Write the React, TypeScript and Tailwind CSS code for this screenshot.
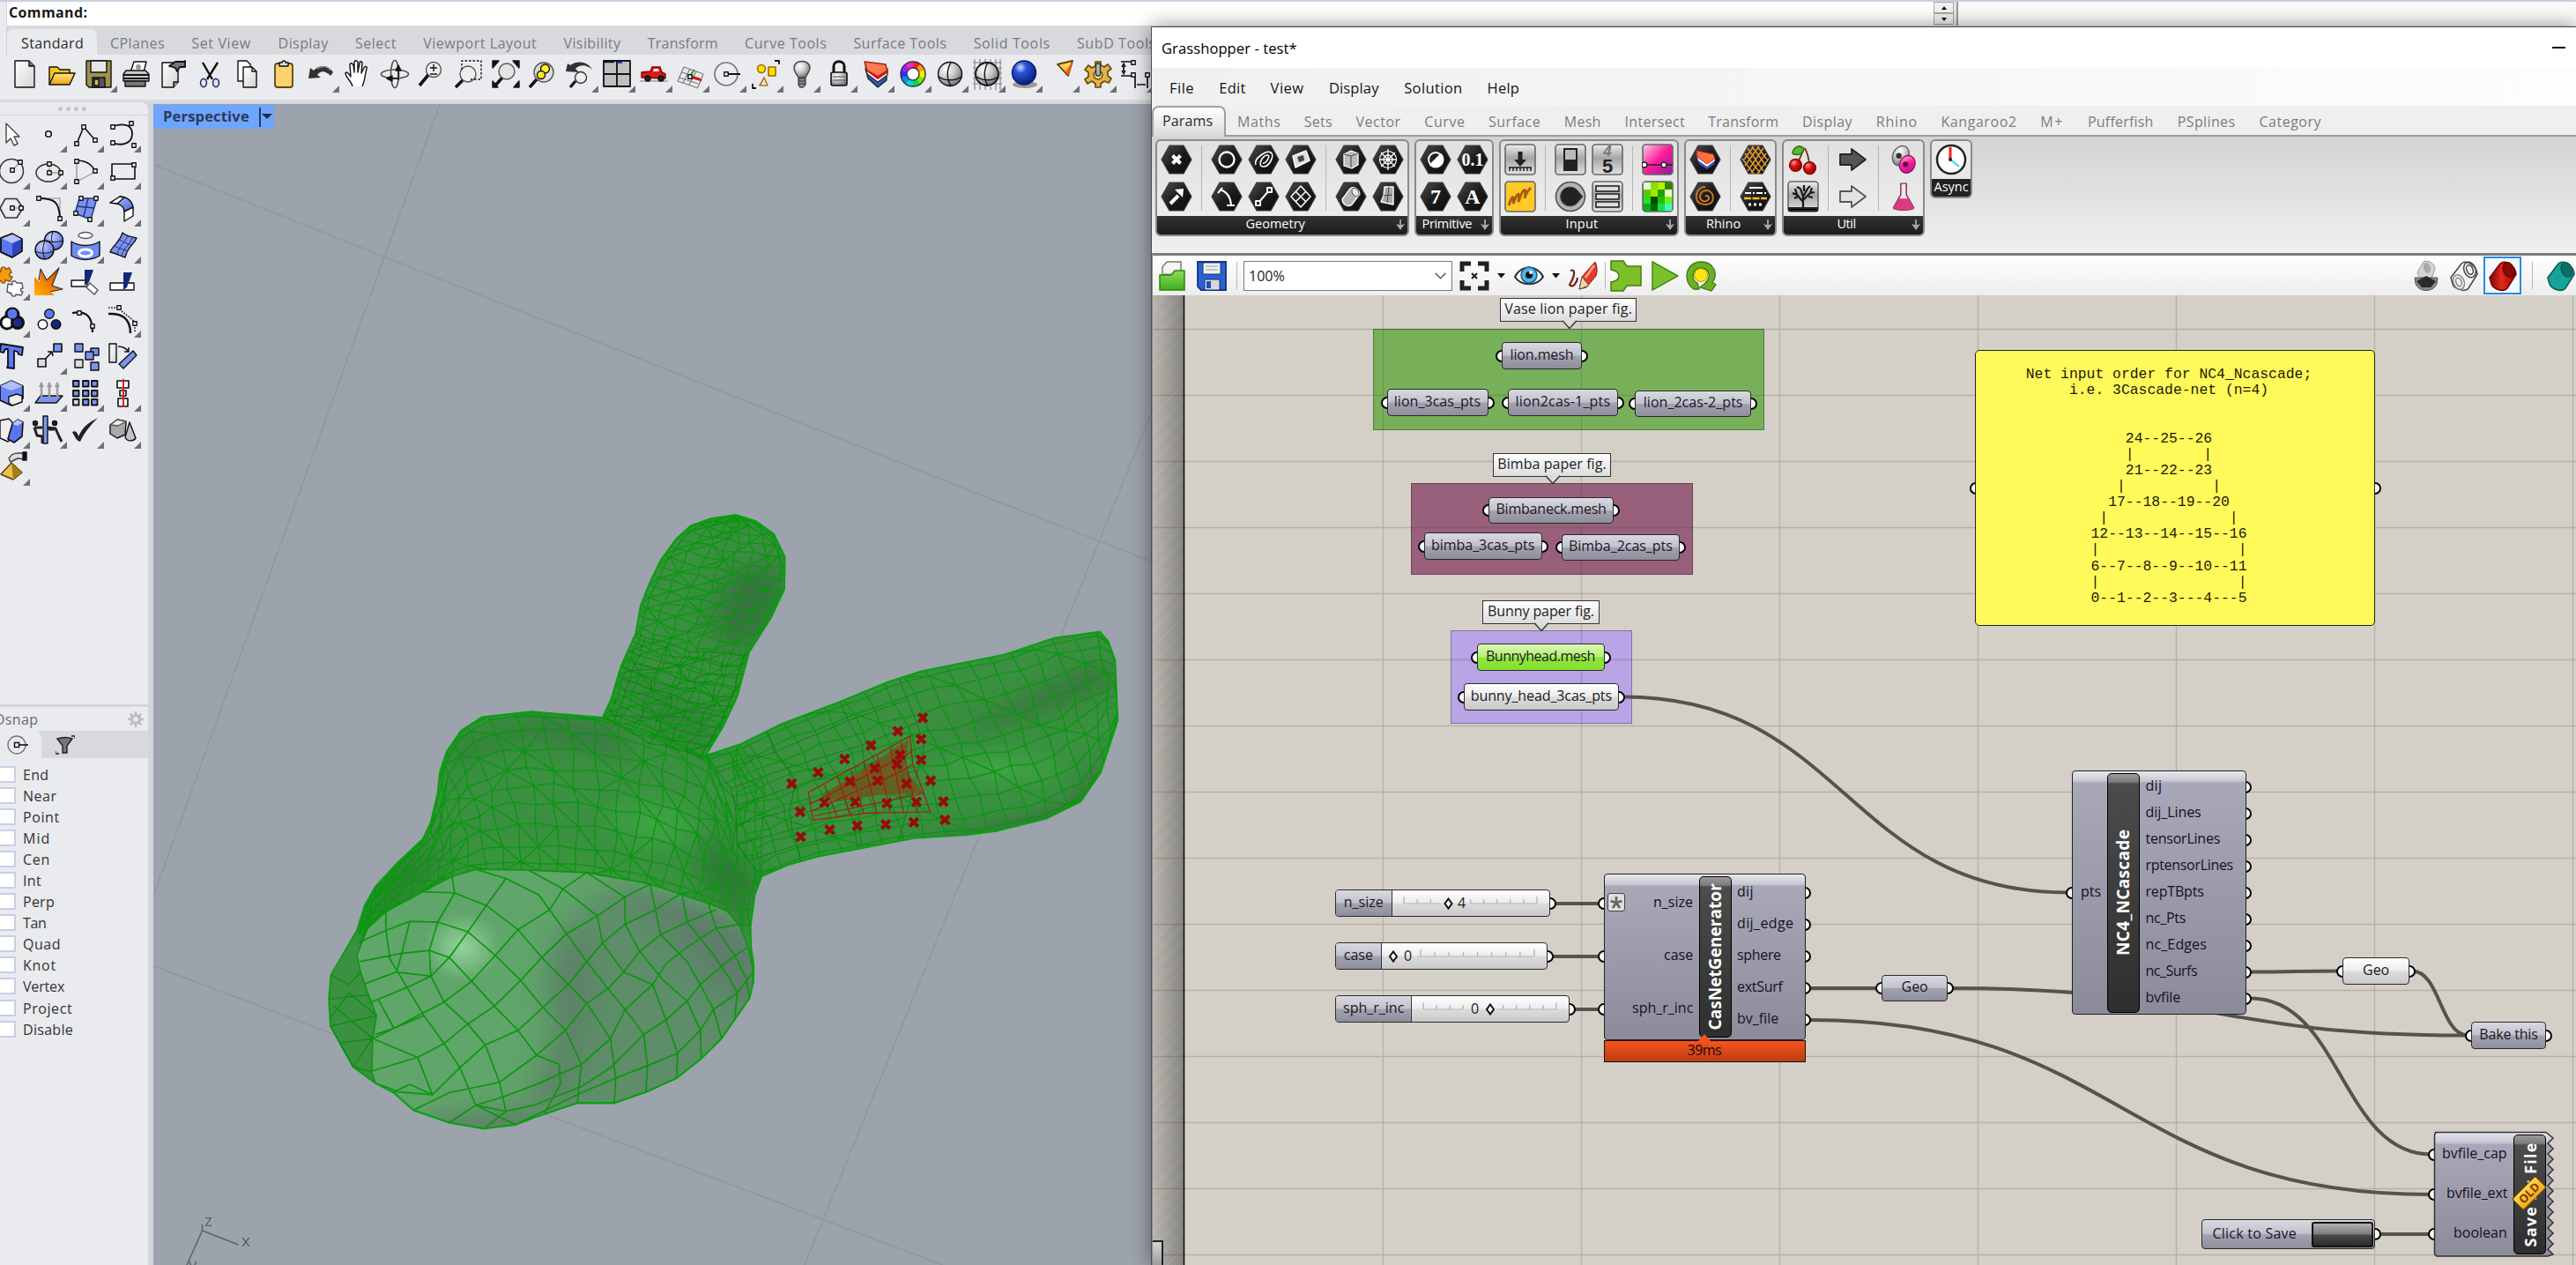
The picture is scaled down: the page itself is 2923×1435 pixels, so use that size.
import React, { useLayoutEffect, useRef, useState } from "react";

/* ---------- shared helpers ---------- */

/** Text tracked so that it fills exactly `w` pixels. */
function Fit({ t, w, className = "" }: { t: string; w: number; className?: string }) {
  const ref = useRef<HTMLSpanElement>(null);
  const [ls, setLs] = useState(0);
  useLayoutEffect(() => {
    const el = ref.current;
    if (!el) return;
    el.style.letterSpacing = "0px";
    const nat = el.offsetWidth;
    setLs((w - nat) / t.length);
    el.style.letterSpacing = (w - nat) / t.length + "px";
  }, [t, w]);
  return (
    <span className={"inline-block whitespace-pre shrink-0 " + className} style={{ width: w }}>
      <span ref={ref} className="inline-block whitespace-pre" style={{ letterSpacing: ls }}>
        {t}
      </span>
    </span>
  );
}

const Sq = ({ x, y, f = "#fff" }: { x: number; y: number; f?: string }) => (
  <rect x={x - 2.2} y={y - 2.2} width="4.4" height="4.4" fill={f} stroke="#111" strokeWidth="1.4" />
);
const B = "#7b92ee";
const K = "#111";

const Ico = ({ children, s = 32 }: { children: React.ReactNode; s?: number }) => (
  <svg width={s} height={s} viewBox="0 0 32 32" fill="none" stroke={K} strokeWidth="1.4" strokeLinejoin="round" className="overflow-visible">
    {children}
  </svg>
);

const Corner = () => (
  <svg width="8" height="8" viewBox="0 0 8 8" className="absolute right-0 bottom-0">
    <path d="M8 0V8H0Z" fill="#6f7073" />
  </svg>
);

const Defs = () => (
  <svg width="0" height="0" className="absolute">
    <defs>
      <linearGradient id="page" x1="0" y1="0" x2="1" y2="1"><stop offset="0" stopColor="#fff" /><stop offset="1" stopColor="#d4d4d4" /></linearGradient>
      <linearGradient id="gold" x1="0" y1="0" x2="0" y2="1"><stop offset="0" stopColor="#ffe680" /><stop offset="1" stopColor="#f0a10c" /></linearGradient>
      <linearGradient id="fire" x1="1" y1="0" x2="0" y2="1"><stop offset="0" stopColor="#e03c00" /><stop offset="1" stopColor="#ffb400" /></linearGradient>
      <linearGradient id="blu" x1="0" y1="0" x2="1" y2="1"><stop offset="0" stopColor="#b9c6ff" /><stop offset="1" stopColor="#4a63dd" /></linearGradient>
      <radialGradient id="ball" cx=".35" cy=".3" r=".75"><stop offset="0" stopColor="#fff" /><stop offset=".5" stopColor="#c9c9c9" /><stop offset="1" stopColor="#6d6d6d" /></radialGradient>
      <radialGradient id="bball" cx=".35" cy=".28" r=".8"><stop offset="0" stopColor="#cfe0ff" /><stop offset=".3" stopColor="#2a55d8" /><stop offset="1" stopColor="#06166e" /></radialGradient>
      <radialGradient id="sball" cx=".35" cy=".3" r=".8"><stop offset="0" stopColor="#c8d2ff" /><stop offset="1" stopColor="#4a63dd" /></radialGradient>
      <radialGradient id="cherry" cx=".35" cy=".3" r=".8"><stop offset="0" stopColor="#ff9a9a" /><stop offset=".4" stopColor="#dc1010" /><stop offset="1" stopColor="#8a0000" /></radialGradient>
      <linearGradient id="hex" x1="0" y1="0" x2="1" y2="1"><stop offset="0" stopColor="#4e4e4e" /><stop offset=".5" stopColor="#1c1c1c" /><stop offset="1" stopColor="#0b0b0b" /></linearGradient>
      <linearGradient id="btn" x1="0" y1="0" x2="0" y2="1"><stop offset="0" stopColor="#eee" /><stop offset=".45" stopColor="#a5a5a5" /><stop offset="1" stopColor="#e2e2e2" /></linearGradient>
      <linearGradient id="pink" x1="0" y1="0" x2="1" y2="1"><stop offset="0" stopColor="#ffd0ea" /><stop offset=".5" stopColor="#ff1a9a" /><stop offset="1" stopColor="#8a1ca0" /></linearGradient>
      <linearGradient id="red3" x1="0" y1="0" x2="1" y2="0"><stop offset="0" stopColor="#7d0500" /><stop offset=".45" stopColor="#e02a1c" /><stop offset="1" stopColor="#980500" /></linearGradient>
      <linearGradient id="grn" x1="0" y1="0" x2="0" y2="1"><stop offset="0" stopColor="#8ddc5c" /><stop offset="1" stopColor="#3fae1c" /></linearGradient>
    </defs>
  </svg>
);

/* ---------- Rhino: standard toolbar icons ---------- */

const wheel = ["#ff2020", "#ff9a00", "#f5f000", "#7be800", "#00d84a", "#00d8d0", "#0090ff", "#2a30ff", "#9a20ff", "#ff20d0"];

const stdIcons: { el: React.ReactNode; c?: boolean }[] = [
  { el: <Ico><path d="M5 1h16l6 6v24H5z" fill="url(#page)" /><path d="M21 1v6h6" fill="#777" /></Ico> },
  { el: <Ico><path d="M2 28V8h9l3 3h11v5" fill="#f4c81a" /><path d="M2 28l6-13h23l-6 13z" fill="url(#gold)" /></Ico> },
  { el: <Ico><path d="M2 1h28v30H5l-3-3z" fill="#9d934a" /><path d="M7 1h18v13H7z" fill="#e4e4e4" /><path d="M9 20h14v11H9z" fill="#555" /><path d="M11 22h5v7h-5z" fill="#c8bf6a" /></Ico>, c: true },
  { el: <Ico><path d="M10 14L14 2h14l-3 12z" fill="#fff" /><path d="M5 12h22l4 4v8H2v-8z" fill="#c6c6c6" /><path d="M2 17h29M2 21h29" strokeWidth="2" /><path d="M4 24h23v6H4z" fill="#777" /><circle cx="19" cy="8" r="3" fill="#999" stroke="none" /></Ico> },
  { el: <Ico><path d="M4 3h18v22l-5 6H4z" fill="url(#page)" /><path d="M17 31v-6h6" fill="#999" /><path d="M12 7l7-5h9l2-1v7h-6l-3 5-2-4z" fill="#777" strokeWidth="1.8" /></Ico> },
  { el: <Ico><path d="M8 3l11 19M25 3L13 22" strokeWidth="2.4" /><ellipse cx="9" cy="26" rx="3.4" ry="4.6" stroke="#27367f" strokeWidth="1.7" /><ellipse cx="23" cy="26" rx="3.4" ry="4.6" stroke="#27367f" strokeWidth="1.7" /></Ico> },
  { el: <Ico><path d="M6 1h10l4 4v19H6z" fill="#fff" /><path d="M12 8h10l5 5v18H12z" fill="url(#page)" /><path d="M22 8v5h5" /></Ico> },
  { el: <Ico><rect x="6" y="4" width="20" height="27" rx="3" fill="#fcd26c" stroke="#5d4813" strokeWidth="1.8" /><path d="M11 7V3h3a2 2 0 014 0h3v4z" fill="#ddd" /></Ico> },
  { el: <Ico><path d="M2 21l2-12 4 3c7-8 17-6 22 2l-3 4C21 12 16 12 12 17l4 3z" fill="#333" stroke="none" /><path d="M12 10c6-4 12-3 15 2" stroke="#999" /></Ico>, c: true },
  { el: <Ico><path d="M10 30c-1-6-8-10-8-15 0-2 3-1 6 4L7 6c0-3 3-3 4 0l1 8V3c0-3 3-3 4 0v11l2-10c0-3 3-3 3 0l-1 11 3-6c2-3 4-1 3 1-2 7-2 14-5 20" fill="#fff" /></Ico> },
  { el: <Ico><ellipse cx="16" cy="16" rx="4.5" ry="15.5" stroke="#555" strokeWidth="1.7" /><ellipse cx="16" cy="16" rx="15.5" ry="5" stroke="#555" strokeWidth="1.7" /><path d="M20 8v15M8 21h13" strokeWidth="1.5" /><path d="M20 6l-3 6h6zM7 21l6-3v6z" fill={K} /></Ico> },
  { el: <Ico><path d="M12 17L2 29" strokeWidth="3.6" /><circle cx="18" cy="11" r="8.5" fill="#eee" stroke="#555" /><path d="M14 9h8M18 5v8M14 16h8" /></Ico> },
  { el: <Ico><path d="M9 23l-8 8" strokeWidth="3.4" /><circle cx="15" cy="16" r="9" fill="#eee" stroke="#555" /><path d="M8 11V1h22v21H18" strokeDasharray="2.5 2" /></Ico> },
  { el: <Ico><path d="M1 1h7L1 9zM31 1h-7l7 8zM1 31v-7l6 7zM31 31v-7l-6 7z" fill={K} /><path d="M12 20L4 29" strokeWidth="3.4" /><circle cx="17" cy="13" r="9" fill="#e4e4e4" stroke="#555" /></Ico> },
  { el: <Ico><path d="M9 22l-8 9" strokeWidth="3.4" /><circle cx="17" cy="14" r="11" fill="#ddd" stroke="#555" /><circle cx="18.500" cy="10" r="5" fill="#ffef20" /><circle cx="14" cy="17" r="4.500" fill="#ffef20" /></Ico> },
  { el: <Ico><path d="M0 13l2-9 3 2c9-6 20-4 25 5-7-6-14-6-19-1l4 4z" fill="#333" stroke="none" /><path d="M11 24l-6 7" strokeWidth="3.200" /><circle cx="17" cy="20" r="6.500" fill="#eee" stroke="#333" /></Ico>, c: true },
  { el: <Ico><path d="M1 1h30v29H1z" fill="#c0c0c0" strokeWidth="1.8" /><path d="M16 1v29M1 16h30" strokeWidth="1.8" /><path d="M1 2h12" strokeWidth="2.500" /><path d="M17 3h5" stroke="#2638c8" strokeWidth="2" /></Ico>, c: true },
  { el: <Ico><path d="M0 24h32" stroke="#999" /><path d="M2 20v-6l10-1 2-5h9l2 6 4 2v5z" fill="#e01818" stroke="#8d0000" /><path d="M15 13l1-3h5l1 3z" fill="#eaeaea" stroke="none" /><circle cx="9" cy="21" r="3" fill="#222" /><circle cx="24" cy="21" r="3" fill="#222" /></Ico>, c: true },
  { el: <Ico><path d="M8 8l22 8M6 14l20 7M3 20l21 7M8 8L1 24M15 10L7 26M22 13l-8 15M30 16l-6 15M1 24l23 8" stroke="#777" strokeWidth="1.200" /><path d="M14 19l6-8" stroke="#2ca02c" strokeWidth="2" /><path d="M15 19l13 4" stroke="#d00" strokeWidth="2.800" /><Sq x={15} y={19} /></Ico>, c: true },
  { el: <Ico><circle cx="14" cy="16" r="13" stroke="#777" strokeWidth="1.700" /><path d="M15 16h15" strokeWidth="2" /><Sq x={14} y={16} /></Ico>, c: true },
  { el: <Ico><circle cx="12" cy="10" r="4.500" fill="#ffe000" stroke="#a06a00" strokeWidth="1.600" /><rect x="20" y="8" width="8" height="10" fill="#ffe000" stroke="#a06a00" strokeWidth="1.600" /><path d="M15 20l4 9h-9z" stroke="#b4761e" strokeWidth="1.600" /><path d="M27 1h5v4M2 27v5h4" strokeWidth="1.800" /></Ico>, c: true },
  { el: <Ico><path d="M12 20C9 15 7 13 7 9c0-10 18-10 18 0 0 4-3 6-5 11z" fill="url(#ball)" stroke="#444" /><path d="M12 21h8v7l-3 3h-3l-2-3z" fill="#999" stroke="#444" /><path d="M12 24h8M12 27h8" stroke="#444" /></Ico>, c: true },
  { el: <Ico><path d="M10 15V7c0-7 12-7 12 0v8" strokeWidth="3" /><rect x="7" y="14" width="18" height="15" rx="2" fill="url(#ball)" strokeWidth="1.600" /><path d="M9 19h14M9 23h14" stroke="#777" /></Ico>, c: true },
  { el: <Ico><path d="M4 10l3 11 11 10 10-8V13l-10 8z" fill="#2b55b8" stroke="#222" /><path d="M4 6l2 10 12 9 11-8V10L18 19z" fill="#fff" stroke="#333" /><path d="M3 2l24 3 2 9-11 7L6 12z" fill="#ff7a55" stroke="#a02510" /><path d="M6 11l12 7 11-7v3l-11 8-11-8z" fill="#d01212" stroke="none" /></Ico>, c: true },
  { el: <Ico>{wheel.map((c, i) => <circle key={c} cx="16" cy="16" r="10.500" stroke={c} strokeWidth="7" strokeDasharray="6.700 60" transform={"rotate(" + (i * 36 - 90) + " 16 16)"} />)}<circle cx="16" cy="16" r="14" stroke="#333" /><circle cx="16" cy="16" r="7" fill="#fff" stroke="#333" /></Ico>, c: true },
  { el: <Ico><circle cx="16" cy="16" r="13.500" fill="url(#ball)" /><path d="M3 19c7 5 19 5 26 0M17 3c-5 8-5 19 0 26" /></Ico>, c: true },
  { el: <Ico><path d="M0 3h33M0 9h33M0 15h33M0 21h33M0 27h33M2 -1v35M8 -1v35M14 -1v35M20 -1v35M26 -1v35M31 -1v35" stroke="#888" strokeWidth="1.200" /><circle cx="16" cy="16" r="13" fill="url(#ball)" strokeWidth="1.800" /><path d="M4 19c7 5 18 5 25 0M17 3c-5 8-5 19 0 26" /></Ico>, c: true },
  { el: <Ico><ellipse cx="17" cy="28" rx="14" ry="4" fill="#999" stroke="none" /><circle cx="16" cy="14.500" r="13.500" fill="url(#bball)" stroke="#0a1a6a" /></Ico>, c: true },
  { el: <Ico><path d="M12 5l17-4-5 17z" fill="url(#gold)" stroke="#6a3a00" strokeWidth="1.800" /><path d="M21 14l4 4 4-17z" fill="#e8601a" stroke="none" /></Ico>, c: true },
  { el: <Ico><path d="M13 2h6v4l4 2 4-3 4 5-4 3v5l4 3-3 5-5-2-4 3v4h-6v-4l-4-3-5 3-3-5 4-3v-5l-4-3 4-5 4 3 4-2z" fill="#e3b24a" stroke="#6a4a08" strokeWidth="1.700" /><circle cx="16" cy="17" r="5" fill="#f0d890" stroke="#6a4a08" /><rect x="13.500" y="4" width="5" height="14" rx="2" fill="#b5b5b5" stroke="#333" /></Ico>, c: true },
  { el: <Ico><path d="M0 2h14M0 18h14M3 5v10M16 19v13M30 19v13M18 28h10" strokeWidth="1.700" /><path d="M1 8l2-4 2 4M1 12l2 4 2-4" /><Sq x={14} y={3} /><Sq x={14} y={17} /><Sq x={30} y={17} /></Ico>, c: true },
];

/* ---------- Rhino: side toolbar icons ---------- */

const sideIcons: { el?: React.ReactNode; c?: boolean }[] = [
  { el: <Ico><path d="M10 4v22l5-5 4 8 4-2-4-8h6z" fill="#fff" stroke="#444" /></Ico> },
  { el: <Ico><circle cx="16" cy="16" r="3.300" fill="#fff" strokeWidth="1.600" /></Ico>, c: true },
  { el: <Ico><path d="M6 27L14 8l13 15" strokeWidth="1.600" /><Sq x={6} y={27} /><Sq x={14} y={8} /><Sq x={27} y={23} /></Ico>, c: true },
  { el: <Ico><path d="M5 7c18-5 22 2 22 9 0 11-12 14-22 10" strokeWidth="1.800" /><Sq x={5} y={8} /><Sq x={26} y={4} /><Sq x={5} y={26} /><Sq x={29} y={29} /></Ico>, c: true },
  { el: <Ico><circle cx="16" cy="16" r="13.500" strokeWidth="1.500" stroke="#333" /><path d="M17 15l8-8" stroke="#999" /><Sq x={17} y={15} /><Sq x={26} y={6} /></Ico>, c: true },
  { el: <Ico><ellipse cx="16" cy="18" rx="14" ry="10" strokeWidth="1.500" stroke="#333" /><path d="M17 18V8M17 18h12" stroke="#999" /><Sq x={17} y={18} /><Sq x={17} y={8} /><Sq x={30} y={18} /></Ico>, c: true },
  { el: <Ico><path d="M6 28V6M6 28l21-11" stroke="#999" /><path d="M6 4c9 0 17 4 21 12" strokeWidth="1.600" /><Sq x={6} y={5} /><Sq x={6} y={28} /><Sq x={27} y={16} /></Ico>, c: true },
  { el: <Ico><rect x="4" y="8" width="26" height="17" strokeWidth="1.600" /><Sq x={29} y={9} /><Sq x={5} y={24} /></Ico>, c: true },
  { el: <Ico><path d="M3 16L9 5.500h13L29 16l-7 11H9z" stroke="#333" strokeWidth="1.600" /><path d="M17 16h10" stroke="#999" /><Sq x={17} y={16} /><Sq x={27} y={16} /></Ico>, c: true },
  { el: <Ico><path d="M5 5h24v23" stroke="#aaa" /><path d="M5 5c18 0 23 4 24 22" strokeWidth="2" /><Sq x={5} y={5} /><Sq x={29} y={28} /></Ico>, c: true },
  { el: <Ico><path d="M9 5h20l-7 24L4 22z" fill={B} stroke="#23327a" /><path d="M19 5l-5 20M6 14l20 2" stroke="#23327a" /><Sq x={11} y={5} /><Sq x={28} y={5} /><Sq x={5} y={22} /><Sq x={21} y={29} /></Ico>, c: true },
  { el: <Ico><path d="M2 10L13 3c8 0 15 5 15 14l-10 3c0-6-6-10-16-10z" fill="url(#blu)" /><path d="M2 10L13 3l5 1-8 7zM18 20l10-5v10l-10 6z" fill="#fff" /></Ico>, c: true },
  { el: <Ico><path d="M4 8l13-5 11 6v14l-11 7-13-6z" fill="#5b77ee" /><path d="M4 8l13-5 11 6-11 5z" fill="#b4c2ff" stroke="none" /><path d="M17 14l11-5v14l-11 7z" fill="#2c44c0" stroke="none" /><path d="M4 8l13-5 11 6v14l-11 7-13-6z" /></Ico>, c: true },
  { el: <Ico><circle cx="22" cy="11" r="10.500" fill="url(#sball)" /><circle cx="11.500" cy="21.500" r="10.500" fill="url(#sball)" /><path d="M1 23c7 3 14 3 20 0M12 11c-3 7-3 14 0 21M21 1c-2 5-2 10 0 12M14 11c6 2 12 2 18 0" strokeWidth="1" /></Ico>, c: true },
  { el: <Ico><ellipse cx="16" cy="5" rx="8" ry="3.500" fill="#fff" stroke="#555" /><path d="M0 12c10 6 22 6 32 0v16c-10 6-22 6-32 0z" fill="#6f8cf2" /><ellipse cx="16" cy="25" rx="7.500" ry="4" stroke="#fff" strokeWidth="3" /></Ico>, c: true },
  { el: <Ico><path d="M16 2c5 4 10 5 16 6-3 8-10 9-13 22-6-2-11-5-17-6C4 17 13 13 16 2z" fill={B} /><path d="M22 6c-4 8-9 10-12 20M27 8c-3 8-9 10-12 20M12 10c5 2 9 5 15 6M7 17c5 3 9 4 14 5" strokeWidth="1" stroke="#23327a" /></Ico>, c: true },
  { el: <Ico><path d="M4 7l5 2c-2-6 5-8 6-3l4-2 3 6c-5 1-3 6 1 5l-3 6-6-2c1 5-5 5-5 1l-7 2-3-7c5 0 4-5 0-4z" fill="#f79a10" stroke="#8a4a00" transform="translate(-4 -4) scale(.92)" /><path d="M15 19l5 1c-2-4 3-6 5-2l6 0 1 6c-4 0-3 4 0 4l-2 4-6-1c0 3-5 3-5-1l-5-2z" fill="#fff" stroke="#555" transform="translate(-3 -1)" /></Ico>, c: true },
  { el: <Ico><path d="M0 31V10l6 6L7 2l7 13L28 0l-8 20 12 4-14 3 5 4z" fill="url(#fire)" stroke="none" /><path d="M5 14L7 1l7 13L28 0l-8 20 12 4-14 3" stroke="#333" strokeWidth="1.200" /></Ico> },
  { el: <Ico><rect x="0" y="14" width="18" height="7" fill="#fff" /><path d="M21 17l9 8-4 5-9-8z" fill="#fff" stroke="#555" /><path d="M15 2h10l-5 14-5 4z" fill="#14257a" stroke="none" /></Ico> },
  { el: <Ico><rect x="2" y="17" width="27" height="8" fill="#fff" /><path d="M17 5h10l-6 17-4 3z" fill="#14257a" stroke="none" /></Ico> },
  { el: <Ico><g strokeWidth="3"><circle cx="17" cy="11" r="7" fill="#5c78f0" /><circle cx="11" cy="20" r="7" fill="#fff" /><circle cx="23" cy="20" r="6.500" fill="#1a2b84" /></g><circle cx="17" cy="10" r="6" fill="#5c78f0" strokeWidth="1" /></Ico>, c: true },
  { el: <Ico><circle cx="17" cy="10" r="5.300" fill="#5c78f0" /><circle cx="9.500" cy="22" r="5.300" fill="#fff" /><circle cx="24.500" cy="22" r="5.300" fill="#14257a" /></Ico> },
  { el: <Ico><path d="M1 9c17-3 23 5 23 22" strokeWidth="2.200" /><Sq x={9} y={9} /><Sq x={24} y={24} /></Ico> },
  { el: <Ico><path d="M0 10c16-1 25 6 25 22" strokeWidth="2.500" /><path d="M0 3h10M15 7l15 12M30 22v9" strokeDasharray="1.600 1.600" strokeWidth="1.600" /><Sq x={12} y={3} /><Sq x={30} y={21} /></Ico>, c: true },
  { el: <Ico><path d="M4 2l25 4-1 9-4-1-1-3-4-1v20l-8-1 1-2V8l-3 0-2 4-4-1z" fill="#5a78f2" strokeWidth="1.800" /></Ico> },
  { el: <Ico><path d="M10 22l10-11" strokeWidth="1.600" /><path d="M21 16l-1-5-5 0" strokeWidth="1.600" /><rect x="4" y="19" width="9" height="9" fill="#ddd" strokeWidth="1.600" /><rect x="22" y="2" width="9" height="9" fill={B} strokeWidth="1.600" /></Ico>, c: true },
  { el: <Ico><rect x="4" y="2" width="9" height="9" fill={B} /><rect x="22" y="7" width="9" height="8" fill={B} /><rect x="16" y="11" width="9" height="9" fill={B} /><rect x="4" y="20" width="9" height="9" fill="#ddd" /><rect x="22" y="23" width="9" height="9" fill={B} /></Ico> },
  { el: <Ico><rect x="1" y="2" width="8" height="21" fill="url(#page)" /><path d="M11 5c5 0 9 2 12 6M18 11h5V6" strokeWidth="1.500" /><path d="M28 10l4 5-15 15-5-5z" fill={B} /></Ico> },
  { el: <Ico><path d="M3 8l13-6 13 6v14l-13 8-13-6z" fill="#6a86f4" strokeWidth="1.700" /><path d="M3 8l13-6 13 6-13 5z" fill="#aebdff" stroke="none" /><path d="M13 20l9-3 6 2v7l-11 4-4-3z" fill="#f0f0f0" /></Ico>, c: true },
  { el: <Ico><path d="M7 19h25l-7 8H1z" fill={B} /><path d="M8 21V4M17 21V4M26 21V4" stroke="#a29a98" strokeWidth="2.500" /><path d="M5 9l3-6 3 6zM14 9l3-6 3 6zM23 9l3-6 3 6z" fill="#a29a98" stroke="none" /></Ico>, c: true },
  { el: <Ico>{[2, 13, 23].map((y) => [2, 13, 23].map((x) => <rect key={x + "-" + y} x={x} y={y} width="6.500" height="6.500" fill={x === 2 && y === 23 ? "#ddd" : B} strokeWidth="1.800" />))}</Ico>, c: true },
  { el: <Ico><rect x="10" y="2" width="13" height="8" fill="#fff" strokeWidth="1.600" /><rect x="13" y="13" width="7" height="6" fill="#fff" strokeWidth="1.600" /><rect x="11" y="22" width="11" height="9" fill="#fff" strokeWidth="1.600" /><path d="M17 0v32" stroke="#e02020" strokeWidth="2" /></Ico>, c: true },
  { el: <Ico><path d="M3 5l10-2 4 4v18l-5 4-9-4z" fill="#eee" /><path d="M17 9l6-5 6 3-1 16-9 7-7-4z" fill="#5876ee" strokeWidth="1.600" /><path d="M17 9l6-5 6 3-6 4z" fill="#b8c5ff" stroke="none" /></Ico>, c: true },
  { el: <Ico><path d="M10 0h5v31h-5z" fill="#7f96f2" /><circle cx="1" cy="8" r="2.500" fill="#222" /><circle cx="23" cy="8" r="2.500" fill="#222" /><path d="M0 13l3 9 6 1v8M0 13h9M15 13l9 1 4 9 3 6M16 15h7" strokeWidth="3" stroke="#222" /></Ico>, c: true },
  { el: <Ico><path d="M1 18c4-2 6 1 7 5C13 12 20 7 30 2 22 10 15 18 10 29 6 28 4 24 1 18z" fill="#222" stroke="none" /></Ico>, c: true },
  { el: <Ico><path d="M2 10l8-6 10 2-1 15-9 4-8-5z" fill="#aaa" /><path d="M2 10l8-6 10 2-9 5z" fill="#eee" stroke="#555" /><path d="M24 7l7 18c-3 4-10 4-12-1z" fill="#c4c4c4" /></Ico>, c: true },
  { el: <Ico><path d="M13 6c3-5 6-6 11-6h7v7l-8-1-8 4z" fill="#ddd" stroke="#444" /><path d="M29 -1h4v9h-4z" fill="#111" /><path d="M16 11l12 11-10 8L4 24z" fill="#e8c050" stroke="#5a3e00" /><path d="M16 11l12 11-10 8z" fill="#a57c18" stroke="none" /></Ico>, c: true },
];

const rhinoTabs: [string, number][] = [
  ["CPlanes", 62], ["Set View", 68], ["Display", 57], ["Select", 47], ["Viewport Layout", 129],
  ["Visibility", 65], ["Transform", 80], ["Curve Tools", 93], ["Surface Tools", 106], ["Solid Tools", 87], ["SubD Tools", 90],
];
const osnaps: [string, number][] = [
  ["End", 30], ["Near", 38], ["Point", 42], ["Mid", 31], ["Cen", 31], ["Int", 21], ["Perp", 36], ["Tan", 27],
  ["Quad", 43], ["Knot", 38], ["Vertex", 47], ["Project", 56], ["Disable", 57],
];

/* ---------- Rhino: mesh drawing ---------- */

type P = [number, number];
const pts = (s: string): P[] => s.trim().split(/\s+/).map((q) => q.split(",").map(Number) as P);

/** Evenly spaced samples along a polyline. */
function resample(a: P[], n: number): P[] {
  const L = [0];
  for (let i = 1; i < a.length; i++) L.push(L[i - 1] + Math.hypot(a[i][0] - a[i - 1][0], a[i][1] - a[i - 1][1]));
  const out: P[] = [];
  for (let k = 0; k <= n; k++) {
    const d = (L[L.length - 1] * k) / n;
    let i = 1;
    while (i < a.length - 1 && L[i] < d) i++;
    const t = (d - L[i - 1]) / (L[i] - L[i - 1]);
    out.push([a[i - 1][0] + (a[i][0] - a[i - 1][0]) * t, a[i - 1][1] + (a[i][1] - a[i - 1][1]) * t]);
  }
  return out;
}

/** Wire grid between two boundary curves, with a bulge for the surface's roundness. */
function loft(a: P[], b: P[], n: number, m: number, bx: number, by: number, diag: number): string {
  const A = resample(a, n);
  const C = resample(b, n);
  const g: P[][] = [];
  for (let j = 0; j <= m; j++) {
    const u = j / m;
    const v = 0.5 - 0.5 * Math.cos(Math.PI * u) * (0.55 + 0.45 * Math.abs(Math.cos(Math.PI * u)));
    g.push(A.map((p, i) => {
      const w = Math.sin(Math.PI * u);
      const jit = Math.sin(i * 2.3 + j * 1.7) * 5 * w;
      return [p[0] + (C[i][0] - p[0]) * v + bx * w + jit, p[1] + (C[i][1] - p[1]) * v + by * w + Math.cos(i * 1.9 - j * 2.1) * 6 * w];
    }));
  }
  const s = (p: P) => p[0].toFixed(1) + " " + p[1].toFixed(1);
  let d = "";
  for (let j = 0; j <= m; j++) d += "M" + g[j].map(s).join("L");
  for (let i = 0; i <= n; i++) d += "M" + g.map((r) => s(r[i])).join("L");
  for (let j = 0; j < m; j++)
    for (let i = 0; i < n; i++) {
      if ((i * 7 + j * 3) % 5 < diag) d += "M" + s(g[j][i]) + "L" + s(g[j + 1][i + 1]);
      else if ((i + j) % 5 < diag - 1) d += "M" + s(g[j + 1][i]) + "L" + s(g[j][i + 1]);
    }
  return d;
}

const earL = pts("540,535 556,495 575,415 603,335 612,270 630,212 650,160 680,108 707,77 745,60 792,51");
const earR = pts("735,630 768,560 795,487 817,382 859,298 884,230 885,152 864,97 830,66 792,51");
const ear2T = pts("735,630 800,603 880,553 980,505 1080,453 1140,428 1210,410 1300,387 1395,347 1481,332 1497,355 1510,400");
const ear2B = pts("841,920 890,893 945,873 1040,850 1130,828 1230,820 1285,811 1380,781 1445,740 1483,670 1515,545");
const headTop = pts("75,1050 90,990 110,945 150,890 200,830 215,790 228,720 232,670 245,620 272,570 312,537 405,524 540,538 640,575 735,630 765,700 785,780");
const cut = pts("75,1110 95,1045 130,1005 200,957 255,920 300,903 400,905 510,911 630,938 740,985 775,1003");
const neckR = pts("785,640 795,730 795,850 800,1040");
const neckR2 = pts("800,603 850,700 841,800 841,920 828,965 820,1040");

const line = (p: P[]) => p.map((q) => q.join(" ")).join("L");
const outline =
  "M540 538L556 495L575 415L603 335L612 270L630 212L650 160L680 108L707 77L745 60L792 51L830 66L864 97L885 152L884 230L859 298L817 382L795 487L768 560L735 630L800 603L880 553L980 505L1080 453L1140 428L1210 410L1300 387L1395 347L1481 332L1497 355L1510 400L1515 545L1483 670L1445 740L1380 781L1285 811L1230 820L1130 828L1040 850L945 873L890 893L841 920L828 965L820 1040L821 1090L826 1135L825 1175L818 1213L765 1310L725 1360L680 1405L625 1437L562 1465L492 1465L410 1500L375 1517L315 1526L250 1512L182 1482L145 1440L110 1417L68 1378L25 1280L22 1215L26 1157L75 1050L90 990L110 945L150 890L200 830L215 790L228 720L232 670L245 620L272 570L312 537L405 524Z";
const face =
  "M75 1110L95 1045L130 1005L200 957L255 920L300 903L400 905L510 911L630 938L740 985L775 1003L800 1040L818 1100L825 1150L825 1175L818 1213L765 1310L725 1360L680 1405L625 1437L562 1465L492 1465L410 1500L375 1517L315 1526L250 1512L182 1482L145 1440L110 1417L103 1390L105 1310L112 1255L97 1205L82 1150Z";

const faceWires = [
  "200,957 260,960 320,990 380,1048 425,1115 475,1180 510,1225 555,1310 565,1405 562,1465",
  "85,1075 130,1050 175,1028 228,1030 285,1053 337,1110 385,1170 427,1235 470,1290 500,1372 492,1465",
  "80,1125 160,1105 212,1098 250,1115 292,1172 335,1232 380,1290 415,1350 458,1372 460,1420 430,1490",
  "90,1178 150,1150 215,1160 250,1115",
  "97,1225 170,1187 215,1160 240,1222 285,1275 318,1325 345,1415 357,1485",
  "300,903 357,925 420,965 472,1058 510,1125 550,1190 583,1240 618,1300 625,1375 622,1435",
  "400,905 465,950 530,1015 540,1080 580,1150 635,1180 660,1265 682,1345 680,1405",
  "510,911 582,970 583,1035 610,1100 655,1170 700,1220 725,1290 727,1355",
  "630,938 640,1000 650,1060 700,1125 725,1180 750,1240 765,1310",
  "690,960 700,1030 745,1100 780,1165 795,1200 790,1265",
  "740,985 755,1045 790,1110 812,1165 818,1213",
  "105,1310 145,1285 240,1222 292,1172 337,1110 380,1048 440,1000 465,950 510,911",
  "103,1388 190,1355 240,1322 285,1275 335,1232 385,1170 425,1115 472,1058 530,1015 582,970 630,938",
  "145,1437 218,1445 270,1380 318,1325 380,1290 427,1235 475,1180 510,1125 540,1080 583,1035 640,1000 690,960",
  "182,1482 250,1440 345,1415 415,1350 470,1290 510,1225 550,1190 580,1150 610,1100 650,1060 700,1030 755,1000",
  "250,1512 300,1470 352,1450 415,1420 500,1372 555,1310 583,1240 635,1180 660,1130 700,1090 755,1045 800,1035",
  "315,1526 357,1485 410,1470 500,1425 555,1380 618,1300 660,1265 700,1220 725,1180 780,1120 815,1090",
  "375,1517 435,1480 500,1440 565,1405 625,1375 682,1345 725,1290 750,1240 795,1200 824,1150",
  "130,1005 130,1050 138,1120 170,1187 202,1255 240,1322 270,1380 300,1470 375,1517",
  "175,1028 160,1105 150,1150",
  "357,925 320,990 285,1053 250,1115",
  "255,920 260,960 228,1030 212,1098 215,1160",
  "110,1300 145,1285 115,1215",
  "105,1310 190,1355 218,1445",
  "202,1255 145,1285",
  "300,1470 357,1485",
  "110,1417 150,1435 175,1420 218,1445",
].map((s) => "M" + line(pts(s))).join("");

const marks = pts(
  "1146,539 1099,571 1143,590 1048,605 998,638 1143,640 948,670 898,697 1161,690 1185,740 1188,784 1129,790 1076,795 1022,798 970,808 915,825 914,765 960,742 1018,741 1078,744 1134,741 1008,692 1060,690 1115,697 1055,660 1097,650 1103,628",
);

function Viewport() {
  return (
    <svg width="1133" height="1317" viewBox="174 118 1133 1317" className="block">
      <defs>
        <filter id="b1" x="-50%" y="-50%" width="200%" height="200%"><feGaussianBlur stdDeviation="28" /></filter>
        <clipPath id="co"><path d={outline} /></clipPath>
        <clipPath id="cf"><path d={face} /></clipPath>
        <radialGradient id="spot"><stop offset="0" stopColor="#93d39c" /><stop offset="1" stopColor="#93d39c" stopOpacity="0" /></radialGradient>
        <radialGradient id="spot2"><stop offset="0" stopColor="#3fa545" /><stop offset="1" stopColor="#3fa545" stopOpacity="0" /></radialGradient>
      </defs>
      <path d="M175 187L1109 560L1307 637M175 1014L499 118M175 1096L320 1151L714 1300L1070 1435M1307 467L913 1435" fill="none" stroke="#9197a0" strokeWidth="1.6" />
      <g transform="translate(360 560) scale(.5995 .4719)">
        <path d={outline} fill="#3b9141" />
        <g clipPath="url(#co)">
          <g filter="url(#b1)">
            <path d="M780 200C820 150 880 160 890 230L820 390L740 330Z" fill="#3d6347" opacity=".75" />
            <path d="M560 420L640 540L740 640L760 560L700 500Z" fill="#2c7a34" opacity=".6" />
            <path d="M420 540L560 560L600 640L480 600L400 590Z" fill="#3c6b45" opacity=".8" />
            <path d="M250 600L420 530L420 570L280 640L240 700Z" fill="#2f7a36" opacity=".8" />
            <path d="M1170 590L1500 400L1500 460L1330 540Z" fill="#37693d" opacity=".9" />
            <path d="M1050 840L1300 800L1420 760L1500 640L1520 700L1400 830Z" fill="#3a5c40" opacity=".9" />
            <path d="M740 800L790 880L840 930L800 1050L720 970Z" fill="#2b6a33" opacity=".7" />
            <path d="M100 950L220 830L230 900L90 1060Z" fill="#247a2b" opacity=".8" />
            <path d="M200 900L700 960L780 1000L780 960L400 840Z" fill="#379a3d" opacity=".7" />
          </g>
          <ellipse cx="640" cy="790" rx="120" ry="90" fill="url(#spot2)" />
          <ellipse cx="1290" cy="660" rx="150" ry="60" fill="url(#spot2)" />
          <path d={loft(earL, earR, 23, 9, 0, 10, 3) + loft(ear2T, ear2B, 21, 11, 12, 0, 1) + loft(headTop, cut, 24, 10, 10, -15, 2) + loft(neckR, neckR2, 10, 3, 0, 0, 1)} fill="none" stroke="#0a960f" strokeWidth="1.3" vectorEffect="non-scaling-stroke" />
          <path d={loft(earL.slice(0, 4), earR.slice(0, 4), 10, 7, 10, 20, 1) + loft(pts("735,630 790,720 795,850 841,920"), pts("1100,440 1150,600 1130,700 1100,835"), 7, 3, 0, 0, 0)} fill="none" stroke="#0b7d10" strokeWidth="1" vectorEffect="non-scaling-stroke" opacity=".8" />
        </g>
        <path d={face} fill="#60a56a" />
        <g clipPath="url(#cf)">
          <g filter="url(#b1)">
            <path d="M470 1020L560 940L700 970L850 1060L860 1260L700 1450L540 1500L400 1480L450 1330L430 1180Z" fill="#5d8d69" />
            <path d="M450 1080L510 1060L500 1300L440 1480L400 1470L450 1300Z" fill="#5b7866" opacity=".75" />
            <path d="M560 930L760 1000L850 1080L840 1240L760 1200L660 1040Z" fill="#5f7a6c" opacity=".85" />
            <path d="M200 1500L420 1470L400 1560L200 1560Z" fill="#5f7f68" />
          </g>
          <ellipse cx="275" cy="1090" rx="75" ry="85" fill="url(#spot)" />
        </g>
        <path d={faceWires} fill="none" stroke="#0d960f" strokeWidth="1.7" vectorEffect="non-scaling-stroke" />
        <path d={face} fill="none" stroke="#0d960f" strokeWidth="1.6" vectorEffect="non-scaling-stroke" />
        <path d={outline} fill="none" stroke="#0aa010" strokeWidth="2" vectorEffect="non-scaling-stroke" />
        <path d="M26 1157L60 1180L82 1150M22 1215L97 1205M25 1260L60 1200L112 1255L25 1280L68 1378L105 1310L30 1230M68 1378L103 1390M45 1320L105 1310" fill="none" stroke="#0a8f0f" strokeWidth="1.4" vectorEffect="non-scaling-stroke" />
        <path d="M955 725L1120 590L1112 660L1148 720L1060 725L985 740Z" fill="#74521c" opacity=".8" />
        <path d="M930 718L1122 583L1127 650L1148 720L1160 765L1040 768L938 785ZM938 762L1110 665L1127 650M935 745L1127 620M940 775L1148 720M960 700L985 780M985 682L1010 775M1010 664L1035 770M1035 647L1060 770M1060 630L1085 768M1085 612L1110 768M1105 598L1135 766" fill="none" stroke="#a81a0c" strokeWidth="1.200" vectorEffect="non-scaling-stroke" />
      </g>
      <path
        d={marks.map((p) => {
          const x = 360 + p[0] / 1.668;
          const y = 560 + p[1] / 2.119;
          return `M${x - 4.8} ${y - 4.8}l9.600 9.600M${x + 4.8} ${y - 4.8}l-9.600 9.600`;
        }).join("")}
        stroke="#960c0c" strokeWidth="4.200"
      />
      <path d="M229.500 1389v7l41 16M229.500 1396l-18 40" stroke="#5c6168" strokeWidth="1.500" fill="none" />
      <g fill="#5c6168" className="font-['Open_Sans',sans-serif] text-[19px]">
        <text x="232" y="1391">z</text>
        <text x="274" y="1414">x</text>
        <text x="214" y="1441">y</text>
      </g>
    </svg>
  );
}

/* ---------- Rhino window ---------- */

function Rhino() {
  return (
    <div className="flex h-[1435px] w-[2923px] flex-col bg-[#e9ebee]">
      <div className="flex h-[29px] border-t-2 border-[#c9cfdf] bg-white">
        <div className="w-2 border-r border-[#cdd3e0] bg-[#e9ebee]" />
        <div className="flex w-[2186px] items-center bg-white pl-[2px] pb-[3px] text-[16px] font-bold text-[#1a1a1a]">
          <Fit t="Command:" w={89} />
        </div>
        <div className="flex w-[28px] flex-col border-r-2 border-[#9a9a9a] bg-[#e6e6e6]">
          {[0, 1].map((i) => (
            <div key={i} className="flex h-[13px] w-[23px] items-center justify-center border border-[#a8a8a8] bg-[#f2f2f2]">
              <svg width="8" height="6" viewBox="0 0 8 6"><path d={i ? "M1 1h6L4 5z" : "M1 5h6L4 1z"} fill="#111" /></svg>
            </div>
          ))}
        </div>
        <div className="flex-1 bg-[#fbfbfb]" />
      </div>
      <div className="flex h-[33px] bg-[#d7d9dd]">
        <div className="w-2 border-r border-[#cdd3e0] bg-[#e9ebee]" />
        <div className="mt-[4px] flex w-[102px] items-center rounded-t-lg bg-[#e9ebee] pt-[3px] pl-4 text-[16px] text-[#2b2b2b]">
          <Fit t="Standard" w={71} />
        </div>
        <div className="mt-[4px] flex items-center gap-[30.300px] pt-[3px] pl-[15px] text-[16px] text-[#7a7a7a]">
          {rhinoTabs.map(([t, w]) => <Fit key={t} t={t} w={w} />)}
        </div>
      </div>
      <div className="flex h-[51px] pl-[7px]">
        {stdIcons.map((ic, i) => (
          <div key={i} className="relative flex h-[43px] w-[42px] items-center justify-center">
            {ic.el}
            {ic.c && <Corner />}
          </div>
        ))}
      </div>
      <div className="h-[3px] bg-[#d7d9dd]" />
      <div className="flex flex-1 bg-[#d3d5da]">
        <div className="flex w-[168px] flex-col overflow-hidden rounded-tr-lg bg-[#e9ebee]">
          <div className="flex h-[15px] items-center justify-center gap-[4px] border-b border-[#d3d5da] pr-1 pt-[1px]">
            {[0, 1, 2, 3].map((i) => <div key={i} className="size-[5px] rounded-full bg-[#c3c5c9]" />)}
          </div>
          <div className="-ml-2 grid w-[168px] grid-cols-[repeat(4,42px)] auto-rows-[42px]">
            {sideIcons.map((ic, i) => (
              <div key={i} className="relative flex items-center justify-center">
                {ic.el}
                {ic.c && <Corner />}
              </div>
            ))}
          </div>
          <div className="mt-auto flex h-[636px] flex-col border-t-[3px] border-[#d3d5da]">
            <div className="flex h-[27px] items-center justify-between rounded-tr-lg pr-[5px] pt-[1px] text-[16px] text-[#6a6a6a]">
              <Fit t="Osnap" w={51} className="-ml-[7px]" />
              <svg width="18" height="18" viewBox="0 0 18 18" stroke="#bcbec1" fill="none">
                <circle cx="9" cy="9" r="4.500" strokeWidth="3.500" />
                <path d="M9 0v3.500M9 14.500V18M0 9h3.500M14.500 9H18M2.600 2.600l2.500 2.500M12.900 12.900l2.500 2.500M15.400 2.600l-2.500 2.500M5.100 12.900l-2.500 2.500" strokeWidth="2.500" />
              </svg>
            </div>
            <div className="flex h-[31px] bg-[#d7d9dd]">
              <div className="flex w-[47px] items-center rounded-tr-lg bg-[#e9ebee] pl-[8px]">
                <svg width="26" height="22" viewBox="0 0 26 22" fill="none"><circle cx="11" cy="11" r="10" stroke="#777" strokeWidth="1.400" /><path d="M11 11h13" stroke={K} strokeWidth="1.600" /><rect x="8.500" y="8.500" width="5" height="5" fill="#fff" stroke={K} strokeWidth="1.500" /></svg>
              </div>
              <div className="flex items-center pl-[16px]">
                <svg width="22" height="22" viewBox="0 0 22 22"><path d="M2 4c6-2 12-2 17 0l-6 8v8h-5v-8z" fill="#777" stroke="#222" strokeWidth="1.400" /><path d="M18 1h4v3M0 18v3h4" fill="none" stroke="#222" strokeWidth="1.300" /></svg>
              </div>
            </div>
            <div className="flex flex-col pt-[6px]">
              {osnaps.map(([t, w]) => (
                <div key={t} className="flex h-[24.100px] items-center text-[16px] text-[#333]">
                  <div className="mr-[8px] h-[19px] w-[18px] border-2 border-l-0 border-[#c8cfe4] bg-white" />
                  <Fit t={t} w={w} className="pt-[1px]" />
                </div>
              ))}
            </div>
          </div>
        </div>
        <div className="relative ml-[6px] mt-[2px] w-[1133px] bg-[#9ca3ac]">
          <Viewport />
          <div className="absolute left-0 top-[1px] flex h-[27px] w-[137px] items-center rounded-br-md bg-[#6ea5ff] pl-[11px] text-[16.500px] font-bold text-[#2c3a55]">
            <Fit t="Perspective" w={98} />
            <div className="ml-[11px] h-[22px] w-[1.500px] bg-[#2c3a55]" />
            <svg width="12" height="7" viewBox="0 0 12 7" className="ml-[1px]"><path d="M0 0h12L6 6z" fill="#222c44" /></svg>
          </div>
        </div>
      </div>
    </div>
  );
}

/* ---------- Grasshopper ribbon ---------- */

const Hex = ({ children }: { children: React.ReactNode }) => (
  <svg width="36" height="34" viewBox="0 0 36 34" fill="none" stroke="#fff" strokeWidth="2" strokeLinejoin="round">
    <path d="M1 17L10 1h16l9 16-9 16H10z" fill="url(#hex)" stroke="#3c3c3c" strokeWidth="1.200" />
    {children}
  </svg>
);
const Btn = ({ children, f = "url(#btn)" }: { children?: React.ReactNode; f?: string }) => (
  <svg width="36" height="36" viewBox="0 0 36 36" fill="none" stroke="#222" strokeWidth="2">
    <rect x="1" y="1" width="34" height="34" rx="3.500" fill={f} stroke="#666" strokeWidth="1.600" />
    {children}
  </svg>
);
const HexText = ({ t }: { t: string }) => (
  <text x="18" y="25" textAnchor="middle" fill="#fff" stroke="none" className="font-['Liberation_Serif',serif] text-[24px] font-bold">{t}</text>
);

const greens = ["#eaffd0", "#8ae000", "#b8f000", "#2a8a00", "#5ac800", "#a0e800", "#1ea000", "#f0ffb0", "#2adf20", "#004a00", "#20c000", "#70f020", "#00b020", "#006a00", "#10e050", "#40ffb0"];

type Col = [React.ReactNode, React.ReactNode];
const panels: { name: string; w: number; groups: Col[][] }[] = [
  {
    name: "Geometry", w: 67,
    groups: [
      [[<Hex><path d="M13.500 12.500l9 9M22.500 12.500l-9 9" strokeWidth="4" /></Hex>, <Hex><path d="M11 25l9-9" strokeWidth="4" /><path d="M16 9l10-1-1 10z" fill="#fff" stroke="none" /></Hex>]],
      [
        [<Hex><circle cx="18" cy="17" r="8.500" strokeWidth="2.400" /></Hex>, <Hex><path d="M10 9c8 2 12 8 13 17M18 27h9M8 13l5-6" /></Hex>],
        [<Hex><path d="M9 23c-3-7 12-17 17-14s-2 17-9 16 0-13 5-13-2 10-5 9" strokeWidth="1.600" /></Hex>, <Hex><path d="M12 24L24 10" /><rect x="9" y="22" width="5" height="5" fill="#222" /><rect x="22" y="7" width="5" height="5" fill="#222" /></Hex>],
        [<Hex><path d="M9 13l15-6 4 11-16 8z" fill="#ddd" strokeWidth="1.500" /><path d="M14 14l7-2 1 6-6 2z" fill="#444" stroke="none" /></Hex>, <Hex><path d="M18 5l11 12-11 12L7 17zM12 11l12 12M24 11L12 23" strokeWidth="1.500" /></Hex>],
      ],
      [
        [<Hex><path d="M10 11l8-4 8 3v13l-7 4-9-3z" fill="#bbb" strokeWidth="1.300" /><path d="M18 13v13M10 11l8 2 8-3" stroke="#555" strokeWidth="1.200" /></Hex>, <Hex><path d="M8 20L17 8c4-3 10 0 11 6L19 26c-4 4-11 0-11-6z" fill="#b4b4b4" strokeWidth="1.300" /><ellipse cx="23" cy="12" rx="3.500" ry="5" fill="#e8e8e8" stroke="#555" strokeWidth="1" transform="rotate(-30 23 12)" /></Hex>],
        [<Hex><path d="M18 5v24M8 17h20M10 9l16 16M26 9L10 25" strokeWidth="1.300" /><circle cx="18" cy="17" r="5" strokeWidth="1.300" /><circle cx="18" cy="17" r="9.500" strokeWidth="1.200" /></Hex>, <Hex><path d="M14 6h10v20l-14-3 3-7z" fill="#aaa" strokeWidth="1.400" /><path d="M13 16l10-1M19 6l-2 18" stroke="#444" strokeWidth="1" /></Hex>],
      ],
    ],
  },
  {
    name: "Primitive", w: 57,
    groups: [[
      [<Hex><circle cx="18" cy="17" r="8" /><path d="M12 23A8 8 0 0024 11z" fill="#fff" /></Hex>, <Hex><HexText t="7" /></Hex>],
      [<Hex><text x="18" y="24" textAnchor="middle" fill="#fff" stroke="none" className="font-['Liberation_Serif',serif] text-[20px] font-bold">0.1</text></Hex>, <Hex><HexText t="A" /></Hex>],
    ]],
  },
  {
    name: "Input", w: 37,
    groups: [
      [[<Btn><path d="M18 9v11" strokeWidth="5" /><path d="M11 18h14l-7 8z" fill="#222" stroke="none" /><path d="M5 27h26M6 31v-4M10 31v-4M14 31v-4M18 31v-4M22 31v-4M26 31v-4M30 31v-4" strokeWidth="1.500" /></Btn>, <Btn f="#ffc928"><path d="M5 28c4-12 6-12 5-2 5-14 8-14 6-2 5-16 10-18 7-4 1-5 5-10 7-12" stroke="#a85c08" strokeWidth="3" /></Btn>]],
      [
        [<Btn><rect x="10" y="5" width="16" height="26" fill="#222" stroke="none" /><rect x="12" y="7" width="12" height="11" fill="#bbb" stroke="none" /></Btn>, <svg width="36" height="36" viewBox="0 0 36 36"><circle cx="18" cy="18" r="16.500" fill="#b5b5b5" stroke="#555" strokeWidth="1.600" /><path d="M32 18l-6 7a11 11 0 110-14z" fill="#222" stroke="#555" /></svg>],
        [<Btn f="url(#btn)"><text x="18" y="14" textAnchor="middle" fill="#777" stroke="none" className="font-['Liberation_Sans',sans-serif] text-[17px] font-bold italic">4</text><text x="18" y="33" textAnchor="middle" fill="#222" stroke="none" className="font-['Liberation_Sans',sans-serif] text-[22px] font-bold">5</text></Btn>, <Btn><g fill="#ddd" strokeWidth="1.600"><rect x="5" y="6" width="26" height="6" /><rect x="5" y="15" width="26" height="6" /><rect x="5" y="24" width="26" height="6" /></g></Btn>],
      ],
      [[<Btn f="url(#pink)"><path d="M1 24h34" strokeWidth="1.500" /><circle cx="3" cy="24" r="3" fill="#fff" strokeWidth="1.500" /><circle cx="25" cy="24" r="3" fill="#fff" strokeWidth="1.500" /></Btn>, <Btn f="#2ac820">{greens.map((c, i) => <rect key={i} x={2 + (i % 4) * 8} y={2 + Math.floor(i / 4) * 8} width="8.200" height="8.200" fill={c} stroke="none" />)}</Btn>]],
    ],
  },
  {
    name: "Rhino", w: 39,
    groups: [
      [[<Hex><path d="M8 14l3 8 9 6 8-6 1-5-9 4z" fill="#2f58c0" stroke="none" /><path d="M8 10l2 8 10 7 9-7v-3l-9 5z" fill="#fff" stroke="none" /><path d="M8 7l19 4 2 5-9 6-10-7z" fill="#ff7040" stroke="#c23010" strokeWidth="1" /></Hex>, <Hex><path d="M18 17c2-3 6 1 3 4s-9 1-9-4 6-9 11-6 5 12 0 14-14 1-15-6 3-13 10-13" stroke="#c87820" strokeWidth="2" /></Hex>]],
      [[<Hex><path d="M6 10l17 22M9 4l18 26M14 2l16 22M20 2l11 15M3 16l13 17M30 10L13 32M27 4L9 30M22 2L6 24M16 2L5 17M33 16L20 33" stroke="#e09a28" strokeWidth="1.500" /></Hex>, <Hex><path d="M11 7h15" strokeWidth="1.800" /><path d="M6 13h24" strokeDasharray="7 2 2 2" /><path d="M5 19h26" stroke="#f0c020" strokeWidth="2.500" strokeDasharray="8 1.500" /><path d="M10 26h17" strokeWidth="3" strokeDasharray="3 3" /></Hex>]],
    ],
  },
  {
    name: "Util", w: 21,
    groups: [
      [[
        <Ico s={34}><path d="M10 20C14 12 15 8 17 4M23 22C22 14 20 8 18 4" stroke="#7a3a20" strokeWidth="1.800" /><path d="M17 4C10-2 4 6 5 10c6 2 11 0 12-6z" fill="#5cb82c" stroke="#2d7010" /><circle cx="8" cy="22" r="6.500" fill="url(#cherry)" stroke="#8a0000" /><circle cx="23" cy="25" r="6.500" fill="url(#cherry)" stroke="#8a0000" /></Ico>,
        <Btn><path d="M2 31h32v3H2z" fill="#000" /><path d="M18 31V18M18 24l-7-8M18 22l8-8M18 18l-3-9M18 18l5-9M11 16l-5-2M26 14l5-1M15 9l-4-2M23 9l3-3M11 16l-2-7M26 14l2-6M8 20l4-2M29 19l-5-1M19 12l0-7" strokeWidth="2.200" stroke="#181818" /></Btn>,
      ]],
      [[
        <Ico><path d="M1 10h13V4l16 12-16 12v-6H1z" fill="#555" stroke="#222" strokeWidth="1.800" /></Ico>,
        <Ico><path d="M1 10h13V4l16 12-16 12v-6H1z" fill="#e2e2e2" stroke="#555" strokeWidth="1.800" /></Ico>,
      ]],
      [[
        <Ico s={34}><ellipse cx="13" cy="12" rx="8.500" ry="11" fill="url(#ball)" stroke="#666" transform="rotate(25 13 12)" /><ellipse cx="20" cy="21" rx="8" ry="9.500" fill="url(#pink)" stroke="#a01060" transform="rotate(25 20 21)" /><circle cx="18" cy="21" r="3" fill="#6b0c40" stroke="none" /><circle cx="11" cy="12" r="3" fill="#333" stroke="none" /></Ico>,
        <Ico s={34}><path d="M13 2h6v12l8 14c0 3-22 3-22 0l8-14z" fill="#f6e4ee" stroke="#88305a" /><path d="M11 18h10l6 10c0 3-22 3-22 0z" fill="#dc3a80" stroke="none" /></Ico>,
      ]],
    ],
  },
];

function Ribbon() {
  return (
    <div className="flex h-[134px] items-start gap-[6px] border-t-2 border-[#9c9c9c] bg-linear-to-b from-[#d3d3d3] to-[#f0f0f0] pl-[4px] pt-[3px]">
      {panels.map((p) => (
        <div key={p.name} className="flex h-[110px] flex-col overflow-hidden rounded-md border-2 border-[#8a8a8a] bg-linear-to-b from-[#e0e0e0] to-[#f0f0f0]">
          <div className="flex h-[87px] items-center px-[1px]">
            {p.groups.map((g, gi) => (
              <React.Fragment key={gi}>
                {gi > 0 && <div className="mx-[7px] h-[74px] w-px bg-[#b5b5b5]" />}
                {g.map((col, ci) => (
                  <div key={ci} className="flex w-[42px] flex-col">
                    {col.map((ic, k) => <div key={k} className="flex h-[42px] items-center justify-center">{ic}</div>)}
                  </div>
                ))}
              </React.Fragment>
            ))}
          </div>
          <div className="relative flex flex-1 items-center justify-center bg-linear-to-b from-[#333] to-[#1c1c1c] pb-[3px] pr-[16px] text-[14.500px] text-white">
            <Fit t={p.name} w={p.w} />
            <svg width="10" height="12" viewBox="0 0 10 12" className="absolute right-[3px] top-[4px]"><path d="M5 0v9" stroke="#aaa" strokeWidth="1.800" /><path d="M0 5l5 1.500L10 5 5 12z" fill="#aaa" /></svg>
          </div>
        </div>
      ))}
      <div className="flex h-[67px] w-[48px] flex-col overflow-hidden rounded-md border-2 border-[#8a8a8a] bg-[#e8e8e8]">
        <div className="flex h-[44px] items-center justify-center">
          <svg width="36" height="36" viewBox="0 0 36 36" fill="none"><circle cx="18" cy="18" r="16" fill="#fff" stroke="#222" strokeWidth="2.500" /><path d="M17 18V4" stroke="#f02020" strokeWidth="3" /><path d="M17 18l10 8" stroke="#20e0e8" strokeWidth="2" /><circle cx="17" cy="18" r="2" fill="#222" /></svg>
        </div>
        <div className="flex flex-1 items-center justify-center bg-[#222] pb-[2px] text-[14.500px] text-white"><Fit t="Async" w={39} /></div>
      </div>
    </div>
  );
}

const ghMenu: [string, number][] = [["File", 28], ["Edit", 30], ["View", 38], ["Display", 57], ["Solution", 66], ["Help", 37]];
const ghTabs: [string, number][] = [
  ["Maths", 49], ["Sets", 32], ["Vector", 51], ["Curve", 46], ["Surface", 59], ["Mesh", 42], ["Intersect", 68], ["Transform", 80],
  ["Display", 57], ["Rhino", 47], ["Kangaroo2", 86], ["M+", 27], ["Pufferfish", 75], ["PSplines", 66], ["Category", 71],
];

const Sep = () => <div className="h-[31px] w-px bg-[#b8b8b8]" />;
const Caret = () => <svg width="9" height="6" viewBox="0 0 9 6"><path d="M0 0h9L4.500 5.500z" fill="#111" /></svg>;
const Tube = ({ f, s, i }: { f: string; s: string; i: string }) => (
  <svg width="34" height="36" viewBox="0 0 34 36" fill="none" stroke={s} strokeWidth="1.600">
    <path d="M2 20L14 4c6-5 17 2 18 12L22 32c-4 5-16 1-18-5z" fill={f} />
    <ellipse cx="23.500" cy="11" rx="6" ry="8.500" transform="rotate(-22 23.500 11)" fill={i} />
  </svg>
);

function ToolStrip() {
  return (
    <div className="flex h-[48px] items-center border-t-[3px] border-[#7c7c7c] bg-linear-to-b from-white to-[#ededed] pl-[7px]">
      <svg width="30" height="34" viewBox="0 0 30 34"><path d="M4 15V7l5-6h16v15z" fill="#f4f4f4" stroke="#777" strokeWidth="1.400" /><path d="M1 33V16h13l4-5h11v22z" fill="url(#grn)" stroke="#2c8410" strokeWidth="1.500" /></svg>
      <svg width="34" height="34" viewBox="0 0 34 34" className="ml-[13px]"><path d="M1 1h32v32H5l-4-4z" fill="#2a62d0" stroke="#12357e" strokeWidth="1.800" /><path d="M7 2h20v13H7z" fill="#f0f0f0" stroke="#12357e" /><path d="M10 6h14M10 10h14" stroke="#999" /><path d="M9 21h17v12H9z" fill="#d8d8d8" stroke="#12357e" /><path d="M11 23h5v8h-5z" fill="#1c4fc0" /></svg>
      <div className="ml-[11px] mr-[7px]"><Sep /></div>
      <div className="flex h-[34px] w-[237px] items-center justify-between border border-[#7a7a7a] bg-white pl-[5px] pr-[6px] text-[16px] text-[#1c1c1c]">
        <Fit t="100%" w={41} />
        <svg width="13" height="8" viewBox="0 0 13 8" fill="none"><path d="M.7.7l5.800 6 5.800-6" stroke="#555" strokeWidth="1.400" /></svg>
      </div>
      <svg width="34" height="34" viewBox="0 0 34 34" fill="none" stroke="#222" strokeWidth="5" className="ml-[8px]"><path d="M3 12V3h10M21 3h10v9M31 22v9H21M13 31H3v-9" /><path d="M14 14l6 6M20 14l-6 6" strokeWidth="2.200" /></svg>
      <div className="ml-[9px] mr-[10px]"><Caret /></div>
      <svg width="34" height="26" viewBox="0 0 34 26"><path d="M1 14C8 0 26 0 33 14 26 25 8 25 1 14z" fill="#fff" stroke="#333" strokeWidth="2.200" /><circle cx="17" cy="12" r="9" fill="#4fb4e8" stroke="#1a5c8a" strokeWidth="1.500" /><circle cx="17" cy="12" r="4" fill="#111" /><circle cx="19" cy="9" r="2" fill="#fff" /></svg>
      <div className="ml-[9px] mr-[9px]"><Caret /></div>
      <svg width="34" height="36" viewBox="0 0 34 36" fill="none"><path d="M3 12c7-3 4 8-1 16 4 5 9-4 9-8" stroke="#6c2018" strokeWidth="2.200" /><path d="M13 33l3-14L31 2c2 4 3 10 1 16L21 31z" fill="#e43a28" stroke="#8a1a10" /><path d="M13 33l3-14 8 10z" fill="#f0d8b0" stroke="#555" /><path d="M20 20L30 6" stroke="#ff9a80" strokeWidth="3" /></svg>
      <div className="ml-[8px] mr-[5px]"><Sep /></div>
      <svg width="37" height="36" viewBox="0 0 37 36"><path d="M1 1h14l4 6h16v22H19l-4 6H1V25c12-2 12-12 0-14z" fill="#7cc02c" stroke="#4a7c10" strokeWidth="1.500" /></svg>
      <svg width="31" height="34" viewBox="0 0 31 34" className="ml-[10px]"><path d="M1 1l29 16L1 33z" fill="#7cc02c" stroke="#3f8a10" strokeWidth="1.500" /></svg>
      <svg width="36" height="36" viewBox="0 0 36 36" className="ml-[7px]"><path d="M10 33C-4 24 1 2 18 2c16 0 20 16 13 23l4 3-5 7-13-4 5-4C32 18 26 9 18 9 8 9 6 22 14 26l2 7z" fill="#6bb022" stroke="#3f7a10" strokeWidth="1.300" /><circle cx="18" cy="17" r="7.500" fill="#ffe610" stroke="#b09000" /></svg>
      <div className="flex-1" />
      <svg width="30" height="36" viewBox="0 0 30 36"><path d="M5 14L12 2c6-3 13 3 13 8l-4 11H8z" fill="#d4d4d4" stroke="#999" /><ellipse cx="16" cy="9" rx="4" ry="6" fill="#aaa" transform="rotate(-15 16 9)" /><path d="M2 20h26l-1 7c-4 10-20 10-24 0z" fill="#888" stroke="#555" /><path d="M15 18l11 6-6 7H10l-6-7z" fill="#2a2a2a" /></svg>
      <svg width="34" height="36" viewBox="0 0 34 36" fill="none" stroke="#444" strokeWidth="1.500" className="ml-[11px]">
        <path d="M2 20L14 4c6-5 17 2 18 12L22 32c-4 5-16 1-18-5z" fill="#f2f2f2" />
        <ellipse cx="23.500" cy="11" rx="6.500" ry="9" transform="rotate(-22 23.500 11)" />
        <ellipse cx="23.500" cy="11" rx="3.500" ry="5.500" transform="rotate(-22 23.500 11)" />
        <ellipse cx="11" cy="25" rx="6" ry="8.500" transform="rotate(-22 11 25)" stroke="#888" />
        <ellipse cx="11" cy="25" rx="3" ry="5" transform="rotate(-22 11 25)" stroke="#888" />
      </svg>
      <div className="ml-[5px] flex h-[43px] w-[43px] items-center justify-center border-2 border-[#2a8ae0] bg-[#f4f9ff]"><Tube f="url(#red3)" s="#700400" i="#8c0a04" /></div>
      <div className="ml-[12px] mr-[15px]"><Sep /></div>
      <div className="w-[34px]"><Tube f="#16a39a" s="#0b5c58" i="#0d6e68" /></div>
    </div>
  );
}

/* ---------- Grasshopper canvas ---------- */

type Tone = "gray" | "white" | "green";
const toneCls: Record<Tone, string> = {
  gray: "bg-[linear-gradient(#d9d9e2,#c2c2cc_48%,#a3a2b0_52%,#8f8e9d)]",
  white: "bg-[linear-gradient(#ffffff,#ececec_48%,#dcdcdc_52%,#c9c9c9)]",
  green: "bg-[linear-gradient(#dcf8b8,#b2f070_48%,#8fe53c_52%,#84e030)]",
};

const Grip = ({ x, y }: { x: number; y: number }) => (
  <div className="absolute size-[14px] rounded-full border-[2.500px] border-black bg-white" style={{ left: x - 7, top: y - 7 }} />
);

function Capsule({ x, y, w, h = 30.5, t, tw, tone = "gray" }: { x: number; y: number; w: number; h?: number; t: string; tw: number; tone?: Tone }) {
  return (
    <>
      <Grip x={x} y={y + h / 2 + 0.5} />
      <Grip x={x + w} y={y + h / 2 + 0.5} />
      <div className={"absolute flex items-center justify-center rounded-[4px] border-[1.500px] border-[#2a2a2a] pb-[3px] text-[16px] leading-none text-[#1d1825] " + toneCls[tone]} style={{ left: x, top: y, width: w, height: h }}>
        <Fit t={t} w={tw} />
      </div>
    </>
  );
}

const capsules: { x: number; y: number; w: number; h?: number; t: string; tw: number; tone?: Tone }[] = [
  { x: 1704, y: 388, w: 91, t: "lion.mesh", tw: 72 },
  { x: 1573.5, y: 441, w: 115, t: "lion_3cas_pts", tw: 98.5 },
  { x: 1711, y: 441, w: 124.5, t: "lion2cas-1_pts", tw: 107.5 },
  { x: 1855, y: 442.5, w: 132, t: "lion_2cas-2_pts", tw: 112.5 },
  { x: 1689, y: 563.5, w: 142, t: "Bimbaneck.mesh", tw: 125 },
  { x: 1615.5, y: 604, w: 134.5, t: "bimba_3cas_pts", tw: 117.5 },
  { x: 1771.5, y: 605.5, w: 134.5, t: "Bimba_2cas_pts", tw: 117.5 },
  { x: 1675.5, y: 730, w: 145, t: "Bunnyhead.mesh", tw: 124, tone: "green" },
  { x: 1660.5, y: 775, w: 176.5, t: "bunny_head_3cas_pts", tw: 160, tone: "white" },
  { x: 2135, y: 1105.5, w: 75, t: "Geo", tw: 30 },
  { x: 2658, y: 1086, w: 76, t: "Geo", tw: 30, tone: "white" },
  { x: 2804, y: 1159, w: 85, t: "Bake this", tw: 66.5 },
];

const tags: [string, number, number, number, number][] = [
  ["Vase lion paper fig.", 1702, 338, 155, 144.5],
  ["Bimba paper fig.", 1693.5, 514, 134.5, 123],
  ["Bunny paper fig.", 1681.5, 680.5, 133.5, 120.5],
];

const sliders: { t: string; tw: number; y: number; w: number; lw: number; tk: [number, number, number]; d: number; v: string; vx: number }[] = [
  { t: "n_size", tw: 45, y: 1009, w: 243.5, lw: 63.5, tk: [1593, 1744, 11], d: 1643.5, v: "4", vx: 1654 },
  { t: "case", tw: 33, y: 1069, w: 240.5, lw: 51.5, tk: [1612, 1741, 9], d: 1581, v: "0", vx: 1593 },
  { t: "sph_r_inc", tw: 69, y: 1129, w: 266, lw: 86, tk: [1615, 1766, 11], d: 1691, v: "0", vx: 1669 },
];

function Slider(s: (typeof sliders)[number]) {
  const step = (s.tk[1] - s.tk[0]) / (s.tk[2] - 1);
  const lo = Math.min(s.d, s.vx) - 1524;
  const hi = Math.max(s.d, s.vx + 8) - 1508;
  const ticks = Array.from({ length: s.tk[2] }, (_, i) => s.tk[0] + i * step - 1515).filter((x) => x < lo + 1 || x > hi - 1);
  return (
    <>
      <Grip x={1515 + s.w} y={s.y + 16} />
      <div className={"absolute flex overflow-hidden rounded-[4px] border-[1.500px] border-[#2a2a2a] text-[16px] leading-none text-[#1d1825] " + toneCls.white} style={{ left: 1515, top: s.y, width: s.w, height: 31 }}>
        <div className={"flex items-center justify-center border-r-[1.500px] border-[#333] pb-[3px] " + toneCls.gray} style={{ width: s.lw }}>
          <Fit t={s.t} w={s.tw} />
        </div>
      </div>
      <svg className="absolute left-[1515px] overflow-visible" style={{ top: s.y }} width={s.w} height="31">
        <path d={ticks.map((x, i) => `M${x} 16v-${i === 0 || i === ticks.length - 1 ? 8 : 5}`).join("")} stroke="#b0b0b0" strokeWidth="1.200" />
        <path d={(ticks[0] < lo ? `M${ticks[0]} 16H${lo}` : "") + `M${hi} 16H${ticks[ticks.length - 1]}`} stroke="#b8b8b8" />
        <path d={`M${s.d - 1515} 10.500l4 5.500-4 5.500-4-5.500z`} fill="#fff" stroke="#111" strokeWidth="2" />
        <text x={s.vx - 1515} y="21" fill="#2b1c10" className="text-[16px]">{s.v}</text>
      </svg>
    </>
  );
}

const Port = ({ t, w, y, left, right }: { t: string; w: number; y: number; left?: number; right?: number }) => (
  <div className="absolute text-[16px] leading-[20px] text-[#15111c]" style={{ top: y - 12, left: left ?? (right as number) - w }}>
    <Fit t={t} w={w} />
  </div>
);

const body = "bg-[linear-gradient(#e6e6ee,#c9c9d4_11px,#a9a8b9_13px,#8c8b9a)]";

function NameBar({ x, y, w, h, t, tw, size = "text-[19px]" }: { x: number; y: number; w: number; h: number; t: string; tw: number; size?: string }) {
  return (
    <div className="absolute flex items-center justify-center rounded-[5px] border-[1.500px] border-black bg-[linear-gradient(#9a9a9a,#7c7c7c_9px,#4c4c4c_11px,#2e2e2e)]" style={{ left: x, top: y, width: w, height: h }}>
      <div className={"-rotate-90 font-bold leading-none text-white " + size}>
        <Fit t={t} w={tw} />
      </div>
    </div>
  );
}

const casOut: [string, number, number][] = [["dij", 19, 1013], ["dij_edge", 64, 1049], ["sphere", 50, 1085], ["extSurf", 52, 1121], ["bv_file", 47, 1157]];
const casIn: [string, number, number][] = [["n_size", 45, 1025], ["case", 33, 1085], ["sph_r_inc", 69, 1145]];
const ncOut: [string, number][] = [["dij", 19], ["dij_Lines", 63.5], ["tensorLines", 84.5], ["rptensorLines", 99], ["repTBpts", 66.5], ["nc_Pts", 45], ["nc_Edges", 69], ["nc_Surfs", 59], ["bvfile", 39.5]];
const saveIn: [string, number, number][] = [["bvfile_cap", 74, 1309.5], ["bvfile_ext", 69, 1355], ["boolean", 61, 1400]];

const wire = (x1: number, y1: number, x2: number, y2: number) => `M${x1} ${y1}C${(x1 + x2) / 2} ${y1} ${(x1 + x2) / 2} ${y2} ${x2} ${y2}`;

const netText = `Net input order for NC4_Ncascade;
i.e. 3Cascade-net (n=4)


24--25--26
|        |
21--22--23
|          |
17--18--19--20
|              |
12--13--14--15--16
|                |
6--7--8--9--10--11
|                |
0--1--2--3---4---5`;

function Canvas() {
  const zig = "M2763 1284.500H2889L2897 1291" + Array.from({ length: 11 }, (_, i) => `L2891 ${1297 + i * 12}L2897 ${1303 + i * 12}`).join("") + "L2891 1425H2766Q2762.500 1425 2762.500 1421V1288Q2762.500 1284.500 2766 1284.500Z";
  return (
    <div className="relative flex-1 overflow-hidden bg-[#d4d0c8]">
      <div className="absolute -left-[1308px] -top-[335px] h-[1435px] w-[2923px]">
        <div className="absolute left-[1308px] top-[335px] h-[1100px] w-[36px] bg-[linear-gradient(to_right,#bdbab2,#868480)]" />
        <div className="absolute left-[1308px] top-[335px] h-[1100px] w-[36px] bg-[repeating-linear-gradient(135deg,rgba(255,255,255,.07)_0_1px,rgba(0,0,0,.04)_1px_3px)]" />
        {[[1558, 373, 444, 114.5, "bg-[#78b05a]"], [1600.5, 548, 320.5, 104, "bg-[#98607b]"], [1645.5, 715, 206, 106, "bg-[#b9a4e6]"]].map((g) => (
          <div key={g[0]} className={"absolute border border-black/30 " + g[4]} style={{ left: g[0], top: g[1], width: g[2], height: g[3] }} />
        ))}
        <svg width="2923" height="1435" className="absolute left-0 top-0" fill="none">
          <path d={[1569, 1794, 2019, 2244, 2469, 2694, 2919].map((x) => `M${x}.500 335V1435`).join("") + Array.from({ length: 15 }, (_, i) => `M1308 ${373 + i * 75}.500H2923`).join("")} stroke="rgba(60,50,40,.2)" strokeWidth="1.300" />
          <path d="M1343.500 335V1435" stroke="#111" strokeWidth="1.600" />
          <path d={wire(1842, 790.5, 2347, 1012.5) + wire(1762, 1025, 1817, 1025) + wire(1759, 1085, 1817, 1085) + wire(1785, 1145, 1817, 1145) + wire(2054, 1121, 2132, 1121) + wire(2213, 1121, 2801, 1174.5) + wire(2054, 1157, 2759, 1355) + wire(2554, 1102.5, 2655, 1101.5) + wire(2554, 1132.5, 2759, 1309.5) + wire(2737, 1101.5, 2801, 1174.5) + wire(2698, 1400, 2759, 1400)} stroke="#55534f" strokeWidth="4" />
        </svg>
        <div className="absolute left-[1308px] top-[1407px] h-[40px] w-[12px] border-2 border-l-0 border-[#222] bg-linear-to-b from-[#d4d4d4] to-[#8a8a8a]" />
        {tags.map(([t, x, y, w, tw]) => (
          <React.Fragment key={t}>
            <div className="absolute flex h-[27px] items-center justify-center border-[1.500px] border-[#333] bg-linear-to-b from-white to-[#dcdcdc] pb-[3px] text-[16px] leading-none text-[#222]" style={{ left: x, top: y, width: w }}>
              <Fit t={t} w={tw} />
            </div>
            <svg className="absolute" width="18" height="11" viewBox="0 0 18 11" style={{ left: x + w / 2 - 8, top: y + 25 }}><path d="M1 0.800L9 9.500L17 0.800" fill="#dcdcdc" stroke="#333" strokeWidth="1.400" /></svg>
          </React.Fragment>
        ))}
        {capsules.map((c, i) => <Capsule key={i} {...c} />)}
        {sliders.map((s) => <Slider key={s.t} {...s} />)}

        {/* note panel */}
        <Grip x={2241.5} y={553.5} />
        <Grip x={2695} y={553.5} />
        <div className="absolute left-[2241px] top-[397px] h-[313px] w-[454px] rounded-[5px] border-[1.500px] border-[#222] bg-[#fff95a] pr-[14px] pt-[18px]">
          <pre className="text-center font-['Liberation_Mono',monospace] text-[16.400px] leading-[18.130px] text-[#1d1a05]">{netText}</pre>
        </div>

        {/* CasNetGenerator */}
        {casIn.map(([t, , y]) => <Grip key={t} x={1820} y={y} />)}
        {casOut.map(([t, , y]) => <Grip key={t} x={2048} y={y} />)}
        <div className={"absolute left-[1820px] top-[991px] h-[189px] w-[228.500px] rounded-[4px] border-[1.500px] border-[#222] " + body} />
        {casIn.map(([t, w, y]) => <Port key={t} t={t} w={w} y={y} right={1921} />)}
        {casOut.map(([t, w, y]) => <Port key={t} t={t} w={w} y={y} left={1971} />)}
        <NameBar x={1928} y={994} w={36.5} h={183} t="CasNetGenerator" tw={166} />
        <div className="absolute left-[1824px] top-[1013px] flex h-[21px] w-[20px] items-center justify-center rounded-[3px] border-[1.500px] border-[#444] bg-[#dedede]">
          <svg width="16" height="16" viewBox="0 0 16 16"><path d="M8 1v7M1.500 6L8 8l6.500-2M4 14l4-6 4 6" fill="none" stroke="#666" strokeWidth="2.800" /></svg>
        </div>
        <div className="absolute left-[1819.500px] top-[1180px] flex h-[24.500px] w-[229px] items-center justify-center border-[1.500px] border-[#1c1008] bg-linear-to-b from-[#f8521c] to-[#bc3f14] pb-[3px] text-[16px] leading-none text-[#200b04]">
          <Fit t="39ms" w={39} />
        </div>
        <svg className="absolute left-[1926px] top-[1173px]" width="16" height="9"><path d="M0 9L8 0l8 9z" fill="#f8521c" /></svg>

        {/* NC4_NCascade */}
        <Grip x={2351} y={1012.5} />
        {ncOut.map(([t], i) => <Grip key={t} x={2548} y={892.5 + i * 30} />)}
        <div className={"absolute left-[2351px] top-[874px] h-[277px] w-[197.500px] rounded-[4px] border-[1.500px] border-[#222] " + body} />
        <Port t="pts" w={23} y={1012.5} right={2384} />
        {ncOut.map(([t, w], i) => <Port key={t} t={t} w={w} y={892.5 + i * 30} left={2434.5} />)}
        <NameBar x={2391} y={877} w={37} h={271.5} t="NC4_NCascade" tw={143} />

        {/* Click to Save */}
        <Grip x={2695} y={1400} />
        <div className={"absolute left-[2497.500px] top-[1383px] flex h-[34px] w-[197.500px] items-center rounded-[4px] border-[1.500px] border-[#2a2a2a] pl-[12px] text-[16px] leading-none text-[#1d1825] " + toneCls.gray}>
          <Fit t="Click to Save" w={96} className="pb-[3px]" />
          <div className="ml-auto mr-[1px] h-[29px] w-[70px] rounded-[3px] border-2 border-[#111] bg-[linear-gradient(#b0b0b0,#7c7c7c_48%,#4a4a4a_52%,#2c2c2c)]" />
        </div>

        {/* Save bv File */}
        {saveIn.map(([t, , y]) => <Grip key={t} x={2762} y={y} />)}
        <svg width="2923" height="1435" className="absolute left-0 top-0">
          <defs><linearGradient id="sv" x1="0" y1="0" x2="0" y2="1"><stop offset="0" stopColor="#e6e6ee" /><stop offset=".08" stopColor="#c9c9d4" /><stop offset=".1" stopColor="#a9a8b9" /><stop offset="1" stopColor="#8c8b9a" /></linearGradient></defs>
          <path d={zig} fill="url(#sv)" stroke="#333" strokeWidth="1.500" />
        </svg>
        {saveIn.map(([t, w, y]) => <Port key={t} t={t} w={w} y={y} right={2845} />)}
        <NameBar x={2852} y={1287} w={37} h={135.5} t="Save bv File" tw={119} size="text-[18px]" />
        <div className="absolute left-[2851px] top-[1344px] flex h-[19px] w-[38px] -rotate-45 items-center justify-center rounded-[3px] border border-[#6b4200] bg-linear-to-b from-[#ffd84a] to-[#f0a818] text-[13px] font-bold leading-none text-[#7a3d00]">
          OLD
        </div>
      </div>
    </div>
  );
}

/* ---------- Grasshopper window ---------- */

function Grasshopper() {
  return (
    <div className="absolute left-[1306px] top-[30px] flex h-[1405px] w-[1617px] flex-col border-l border-t border-[#4e4e4e] bg-[#f0f0f0] shadow-[0_0_22px_rgba(0,0,0,.45)]">
      <div className="flex h-[46px] items-center justify-between bg-white pl-[11px] pr-[12px] text-[16.500px] text-black">
        <Fit t="Grasshopper - test*" w={154} className="pt-[3px]" />
        <div className="h-[2px] w-[15px] bg-black" />
      </div>
      <div className="flex h-[43px] items-center gap-[28.300px] bg-linear-to-r from-[#f0f0f0] to-[#fdfdfd] pl-[20px] pt-[3px] text-[16.500px] text-[#151515]">
        {ghMenu.map(([t, w]) => <Fit key={t} t={t} w={w} />)}
      </div>
      <div className="flex h-[33px] items-end bg-[#efefef] text-[16px]">
        <div className="relative z-10 -mb-[2px] flex h-[35px] w-[84px] items-center rounded-t-lg border-2 border-b-0 border-[#a0a0a0] bg-linear-to-b from-white to-[#dadada] pb-[4px] pl-[10px] text-[#2a2a2a]">
          <Fit t="Params" w={57} />
        </div>
        <div className="flex h-[33px] items-center gap-[26.750px] pl-[13px] pt-[3px] text-[#7c7c7c]">
          {ghTabs.map(([t, w]) => <Fit key={t} t={t} w={w} />)}
        </div>
      </div>
      <Ribbon />
      <div className="flex min-h-0 flex-1 flex-col border-l border-[#8a8a8a]">
        <ToolStrip />
        <Canvas />
      </div>
    </div>
  );
}

export default function App() {
  return (
    <div className="relative h-[1435px] w-[2923px] overflow-hidden font-['Open_Sans','Noto_Sans',sans-serif] leading-tight">
      <Defs />
      <Rhino />
      <Grasshopper />
    </div>
  );
}
